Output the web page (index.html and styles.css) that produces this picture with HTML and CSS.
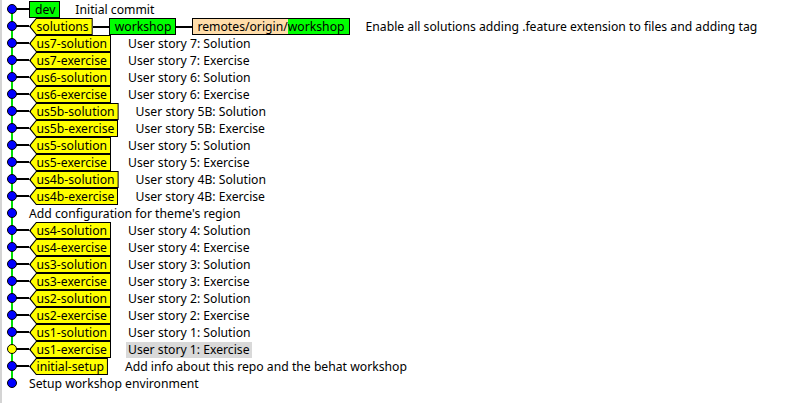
FILE: index.html
```html
<!DOCTYPE html>
<html>
<head>
<meta charset="utf-8">
<link rel="stylesheet" href="styles.css">
</head>
<body>
<div class="view">
  <div class="row first"><span class="graph"><span class="dot"></span></span><span class="head">dev</span><span class="msg">Initial commit</span></div>
  <div class="row"><span class="graph"><span class="dot"></span></span><span class="tag"><span class="tag-in">solutions</span></span><span class="link"></span><span class="head">workshop</span><span class="link"></span><span class="remote"><span class="rpath">remotes/origin/</span><span class="rname">workshop</span></span><span class="msg">Enable all solutions adding .feature extension to files and adding tag</span></div>
  <div class="row"><span class="graph"><span class="dot"></span></span><span class="tag"><span class="tag-in">us7-solution</span></span><span class="msg">User story 7: Solution</span></div>
  <div class="row"><span class="graph"><span class="dot"></span></span><span class="tag"><span class="tag-in">us7-exercise</span></span><span class="msg">User story 7: Exercise</span></div>
  <div class="row"><span class="graph"><span class="dot"></span></span><span class="tag"><span class="tag-in">us6-solution</span></span><span class="msg">User story 6: Solution</span></div>
  <div class="row"><span class="graph"><span class="dot"></span></span><span class="tag"><span class="tag-in">us6-exercise</span></span><span class="msg">User story 6: Exercise</span></div>
  <div class="row"><span class="graph"><span class="dot"></span></span><span class="tag"><span class="tag-in">us5b-solution</span></span><span class="msg">User story 5B: Solution</span></div>
  <div class="row"><span class="graph"><span class="dot"></span></span><span class="tag"><span class="tag-in">us5b-exercise</span></span><span class="msg">User story 5B: Exercise</span></div>
  <div class="row"><span class="graph"><span class="dot"></span></span><span class="tag"><span class="tag-in">us5-solution</span></span><span class="msg">User story 5: Solution</span></div>
  <div class="row"><span class="graph"><span class="dot"></span></span><span class="tag"><span class="tag-in">us5-exercise</span></span><span class="msg">User story 5: Exercise</span></div>
  <div class="row"><span class="graph"><span class="dot"></span></span><span class="tag"><span class="tag-in">us4b-solution</span></span><span class="msg">User story 4B: Solution</span></div>
  <div class="row"><span class="graph"><span class="dot"></span></span><span class="tag"><span class="tag-in">us4b-exercise</span></span><span class="msg">User story 4B: Exercise</span></div>
  <div class="row"><span class="graph nolink"><span class="dot"></span></span><span class="msg plain">Add configuration for theme's region</span></div>
  <div class="row"><span class="graph"><span class="dot"></span></span><span class="tag"><span class="tag-in">us4-solution</span></span><span class="msg">User story 4: Solution</span></div>
  <div class="row"><span class="graph"><span class="dot"></span></span><span class="tag"><span class="tag-in">us4-exercise</span></span><span class="msg">User story 4: Exercise</span></div>
  <div class="row"><span class="graph"><span class="dot"></span></span><span class="tag"><span class="tag-in">us3-solution</span></span><span class="msg">User story 3: Solution</span></div>
  <div class="row"><span class="graph"><span class="dot"></span></span><span class="tag"><span class="tag-in">us3-exercise</span></span><span class="msg">User story 3: Exercise</span></div>
  <div class="row"><span class="graph"><span class="dot"></span></span><span class="tag"><span class="tag-in">us2-solution</span></span><span class="msg">User story 2: Solution</span></div>
  <div class="row"><span class="graph"><span class="dot"></span></span><span class="tag"><span class="tag-in">us2-exercise</span></span><span class="msg">User story 2: Exercise</span></div>
  <div class="row"><span class="graph"><span class="dot"></span></span><span class="tag"><span class="tag-in">us1-solution</span></span><span class="msg">User story 1: Solution</span></div>
  <div class="row"><span class="graph"><span class="dot current"></span></span><span class="tag"><span class="tag-in">us1-exercise</span></span><span class="msg selected">User story 1: Exercise</span></div>
  <div class="row"><span class="graph"><span class="dot"></span></span><span class="tag"><span class="tag-in">initial-setup</span></span><span class="msg">Add info about this repo and the behat workshop</span></div>
  <div class="row last"><span class="graph nolink"><span class="dot"></span></span><span class="msg plain">Setup workshop environment</span></div>
</div>
</body>
</html>
```

FILE: styles.css
```css
html, body {
  margin: 0;
  padding: 0;
  background: #ffffff;
}

.view {
  width: 789px;
  height: 403px;
  box-sizing: border-box;
  border-left: 2px solid #d4d4d4;
  padding-top: 1px;
  font-family: "Noto Sans", "DejaVu Sans", sans-serif;
  font-size: 12.2px;
  color: #000;
}

.row {
  height: 17px;
  display: flex;
  align-items: center;
  white-space: nowrap;
}

.graph {
  position: relative;
  width: 27px;
  height: 17px;
  flex: none;
}

/* vertical green line of the branch */
.graph::before {
  content: "";
  position: absolute;
  left: 9px;
  width: 2px;
  top: 0;
  bottom: 0;
  background: #00e000;
}

.first .graph::before {
  top: 8px;
}

.last .graph::before {
  bottom: 9px;
}

/* horizontal connector from dot to first label */
.graph::after {
  content: "";
  position: absolute;
  left: 10px;
  right: 0;
  top: 7px;
  height: 2px;
  background: #000;
}

.graph.nolink::after {
  display: none;
}

.dot {
  position: absolute;
  left: 5px;
  top: 3px;
  width: 8px;
  height: 8px;
  border: 1px solid #000;
  border-radius: 50%;
  background: #0000ff;
  z-index: 1;
}

.dot.current {
  background: #ffff00;
}

.head {
  flex: none;
  box-sizing: border-box;
  height: 17px;
  line-height: 15px;
  padding: 0 4px 0 5px;
  border: 1px solid #000;
  background: #00ff00;
}

.tag {
  flex: none;
  height: 17px;
  box-sizing: border-box;
  padding: 1px 1px 1px 1.5px;
  background: #000;
  clip-path: polygon(7px 0, 100% 0, 100% 100%, 7px 100%, 0 50%);
}

.tag-in {
  display: block;
  height: 15px;
  line-height: 15px;
  padding: 0 3px 0 6px;
  background: #ffff00;
  clip-path: polygon(6px 0, 100% 0, 100% 100%, 6px 100%, 0 50%);
}

.link {
  flex: none;
  width: 16px;
  height: 2px;
  background: #000;
}

.remote {
  flex: none;
  display: flex;
  box-sizing: border-box;
  height: 17px;
  line-height: 15px;
  border: 1px solid #000;
}

.rpath {
  background: #ffddaa;
  padding-left: 4px;
}

.rname {
  background: #00ff00;
  padding-right: 4px;
}

.msg {
  margin-left: 14px;
  line-height: 16px;
  padding: 0 2px;
}

.head + .msg {
  margin-left: 13px;
}

.tag + .msg {
  margin-left: 15px;
}

.msg.plain {
  margin-left: 0;
  padding: 0;
}

.msg.selected {
  background: #d9d9d9;
}
```
